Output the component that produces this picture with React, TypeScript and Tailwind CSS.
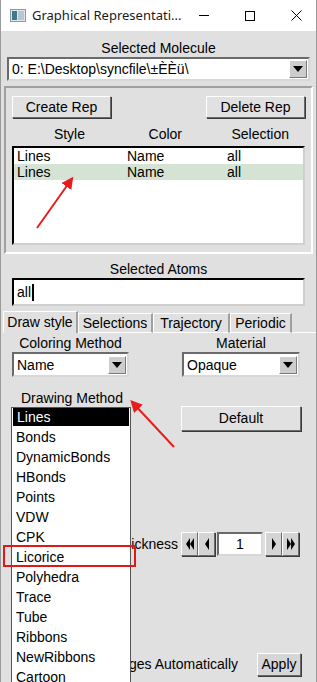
import React from 'react'

const font = { fontFamily: '"Liberation Sans", Arial, sans-serif' }

function Raised({ className = '', children }: { className?: string; children?: React.ReactNode }) {
  return (
    <div
      className={`flex items-center justify-center bg-[#e1e1e1] border border-t-white border-l-white border-r-[#6a6a6a] border-b-[#6a6a6a] shadow-[1px_1px_0_#3a3a3a] ${className}`}
    >
      {children}
    </div>
  )
}

function DownArrow() {
  return (
    <div className="w-[18px] h-[18px] bg-[#cdcdcd] border border-t-white border-l-white border-r-[#7a7a7a] border-b-[#7a7a7a] flex items-center justify-center">
      <svg width="10" height="6" viewBox="0 0 10 6">
        <path d="M0 0 L10 0 L5 6 Z" fill="#000" />
      </svg>
    </div>
  )
}

function Combo({ value, className = '' }: { value: string; className?: string }) {
  return (
    <div
      className={`flex items-center justify-between bg-white border-2 border-t-[#6a6a6a] border-l-[#6a6a6a] border-r-[#d8d8d8] border-b-[#d8d8d8] pl-[3px] pr-[1px] ${className}`}
    >
      <span className="text-[14px] text-black leading-none whitespace-nowrap">{value}</span>
      <DownArrow />
    </div>
  )
}

function StepBtn({ dir, double }: { dir: 'l' | 'r'; double?: boolean }) {
  const tri = (x: number) =>
    dir === 'l' ? `M${x + 4} 0 L${x + 4} 12 L${x} 6 Z` : `M${x} 0 L${x} 12 L${x + 4} 6 Z`
  return (
    <Raised className="w-[17px] h-[24px] !bg-[#d4d4d4]">
      <svg width={double ? 10 : 6} height="12" viewBox={`0 0 ${double ? 10 : 6} 12`}>
        <path d={tri(1)} fill="#000" />
        {double && <path d={tri(5)} fill="#000" />}
      </svg>
    </Raised>
  )
}

const drawing = [
  'Lines',
  'Bonds',
  'DynamicBonds',
  'HBonds',
  'Points',
  'VDW',
  'CPK',
  'Licorice',
  'Polyhedra',
  'Trace',
  'Tube',
  'Ribbons',
  'NewRibbons',
  'Cartoon',
]

export default function App() {
  return (
    <div className="relative w-[317px] h-[682px] overflow-hidden bg-[#e0e0e0] border-x border-[#9a9a9a] text-black" style={font}>
      {/* title bar */}
      <div className="h-[31px] bg-white flex items-center pl-[9px]" style={{ fontFamily: '"Noto Sans", "Open Sans", sans-serif' }}>
        <svg width="16" height="13" viewBox="0 0 16 13" className="shrink-0">
          <rect x="0.5" y="0.5" width="15" height="12" fill="#dfe6ea" stroke="#8a9aa6" />
          <rect x="2" y="2" width="5" height="9" fill="#3f7a8c" />
          <rect x="8" y="2" width="6" height="9" fill="#b8c6cf" />
        </svg>
        <span className="ml-[6px] text-[13px] text-[#1a1a1a] whitespace-nowrap">Graphical Representati...</span>
        <div className="ml-auto flex items-center shrink-0">
          <div className="w-[46px] flex justify-center">
            <div className="w-[10px] h-px bg-black" />
          </div>
          <div className="w-[46px] flex justify-center">
            <div className="w-[10px] h-[10px] border border-black" />
          </div>
          <div className="w-[46px] flex justify-center">
            <svg width="11" height="11" viewBox="0 0 11 11">
              <path d="M0.5 0.5 L10.5 10.5 M10.5 0.5 L0.5 10.5" stroke="#000" strokeWidth="1" />
            </svg>
          </div>
        </div>
      </div>

      {/* selected molecule */}
      <div className="text-center text-[14px] leading-[16px] pt-[9px]">Selected Molecule</div>
      <Combo value="0: E:\Desktop\syncfile\±ÈÈü\" className="mx-[6px] mt-[1px] h-[24px]" />

      {/* reps frame */}
      <div className="mx-[3px] mt-[5px] h-[168px] border-2 border-t-[#a0a0a0] border-l-[#a0a0a0] border-r-white border-b-white px-[6px] pt-[8px]">
        <div className="flex justify-between">
          <Raised className="w-[99px] h-[22px] text-[14px]">Create Rep</Raised>
          <Raised className="w-[99px] h-[22px] text-[14px]">Delete Rep</Raised>
        </div>
        <div className="flex h-[28px] items-end pb-[4px] text-[14px] leading-[16px]">
          <span className="w-[73px] text-right">Style</span>
          <span className="w-[97px] text-right">Color</span>
          <span className="ml-auto pr-[16px]">Selection</span>
        </div>
        <div className="h-[99px] bg-white border-2 border-t-black border-l-black border-r-[#cfcfcf] border-b-[#cfcfcf] text-[14px]">
          <div className="flex h-[16px] items-center pl-[3px]">
            <span className="w-[110px]">Lines</span>
            <span className="w-[100px]">Name</span>
            <span>all</span>
          </div>
          <div className="flex h-[16px] items-center pl-[3px] bg-[#d4e3d4]">
            <span className="w-[110px]">Lines</span>
            <span className="w-[100px]">Name</span>
            <span>all</span>
          </div>
        </div>
      </div>

      {/* selected atoms */}
      <div className="text-center text-[14px] leading-[16px] pt-[7px]">Selected Atoms</div>
      <div className="mx-[11px] mt-[1px] h-[28px] bg-white border-2 border-t-black border-l-black border-r-[#cfcfcf] border-b-[#cfcfcf] flex items-center pl-[3px] text-[14px]">
        all<span className="w-[2px] h-[17px] bg-black ml-[1px]" />
      </div>

      {/* tabs */}
      <div className="flex mt-[5px] h-[22px] items-end pl-[2px] text-[14px]">
        <div className="h-[22px] w-[75px] flex items-center justify-center border-t border-l border-white border-r-2 border-r-[#a0a0a0] bg-[#e0e0e0]">Draw style</div>
        <div className="h-[20px] w-[75px] flex items-center justify-center border-t border-l border-white border-r-2 border-r-[#a0a0a0] border-b border-b-white">Selections</div>
        <div className="h-[20px] w-[77px] flex items-center justify-center border-t border-l border-white border-r-2 border-r-[#a0a0a0] border-b border-b-white">Trajectory</div>
        <div className="h-[20px] w-[62px] flex items-center justify-center border-t border-l border-white border-r-2 border-r-[#a0a0a0] border-b border-b-white">Periodic</div>
        <div className="flex-1 h-px bg-white" />
      </div>

      {/* draw style panel */}
      <div className="flex pt-[2px] text-[14px]">
        <div className="w-[117px] ml-[11px]">
          <div className="text-center leading-[16px]">Coloring Method</div>
          <Combo value="Name" className="h-[25px] mt-[1px]" />
        </div>
        <div className="w-[118px] ml-[53px]">
          <div className="text-center leading-[16px]">Material</div>
          <Combo value="Opaque" className="h-[25px] mt-[1px]" />
        </div>
      </div>

      <div className="flex pt-[29px] text-[14px]">
        <div className="w-[130px]" />
        <Raised className="ml-[50px] w-[120px] h-[25px]">Default</Raised>
      </div>

      <div className="flex items-center mt-[100px] h-[26px] text-[14px]">
        <span className="ml-[40px] w-[140px] text-right pr-[3px]">Line Thickness</span>
        <StepBtn dir="l" double />
        <StepBtn dir="l" />
        <div className="ml-[2px] mr-[2px] w-[46px] h-[24px] bg-white border-2 border-t-[#6a6a6a] border-l-[#6a6a6a] border-r-[#d8d8d8] border-b-[#d8d8d8] flex items-center justify-center">1</div>
        <StepBtn dir="r" />
        <StepBtn dir="r" double />
      </div>

      <div className="flex items-center mt-[95px] h-[24px] text-[14px]">
        <span className="w-[237px] text-right whitespace-nowrap">Apply Changes Automatically</span>
        <Raised className="ml-[19px] w-[44px] h-[23px] !bg-[#d6d6d6]">Apply</Raised>
      </div>

      {/* drawing method popup list (overlay) */}
      <div className="absolute left-[10px] top-[390px] text-[14px]">
        <div className="pl-[10px] leading-[16px] pb-[1px]">Drawing Method</div>
        <div className="w-[120px] bg-white border border-[#555]">
          {drawing.map((d, i) => (
            <div
              key={d}
              className={`flex items-center pl-[4px] ${i === 0 ? 'bg-black text-white mx-[1px] h-[18px] mb-[1px] pl-[3px]' : 'h-[20px]'}`}
            >
              {d}
            </div>
          ))}
        </div>
      </div>

      {/* annotations */}
      <div className="absolute left-[2px] top-[545px] w-[133px] h-[22px] border-2 border-[#e01818]" />
      <svg className="absolute left-0 top-0 pointer-events-none" width="317" height="682">
        <defs>
          <marker id="ah" markerWidth="6" markerHeight="6" refX="4" refY="3" orient="auto">
            <path d="M0 0 L6 3 L0 6 Z" fill="#e81c1c" />
          </marker>
        </defs>
        <line x1="36" y1="228" x2="70" y2="180" stroke="#e81c1c" strokeWidth="2" markerEnd="url(#ah)" />
        <line x1="173" y1="447" x2="132" y2="403" stroke="#e81c1c" strokeWidth="2" markerEnd="url(#ah)" />
      </svg>
    </div>
  )
}
